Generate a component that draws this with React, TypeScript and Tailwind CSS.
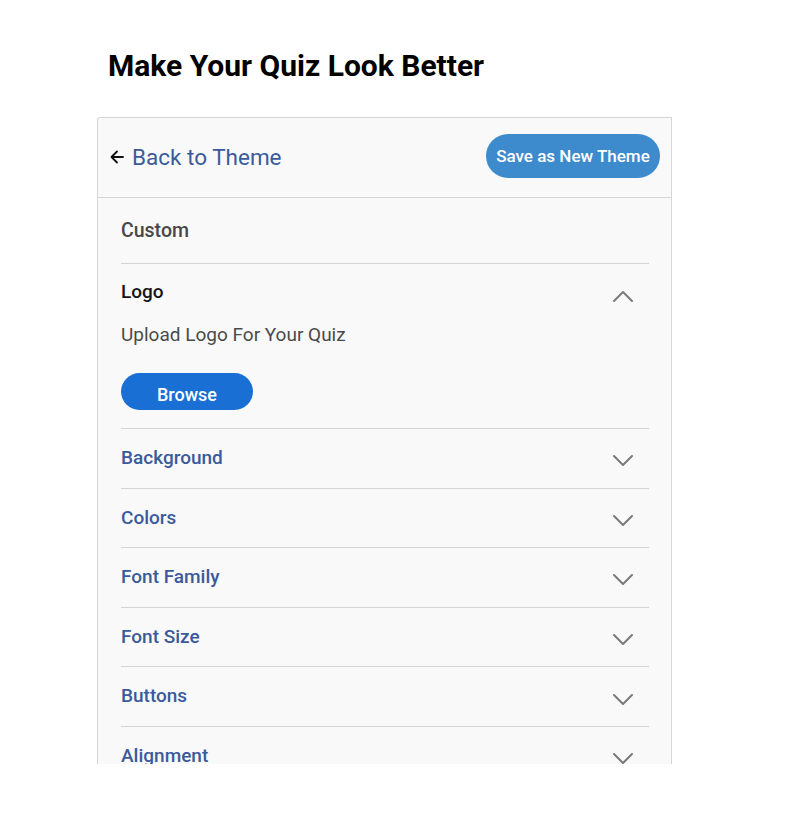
import React from 'react';

const sections = ['Background', 'Colors', 'Font Family', 'Font Size', 'Buttons', 'Alignment'];

function Chevron({ up = false }: { up?: boolean }) {
  return (
    <svg width="20" height="12" viewBox="0 0 20 12" fill="none" className="shrink-0">
      <polyline
        points={up ? '1,11 10,2 19,11' : '1,1 10,10 19,1'}
        stroke="#7a7a7a"
        strokeWidth="2"
        strokeLinecap="round"
        strokeLinejoin="round"
      />
    </svg>
  );
}

export default function App() {
  return (
    <div className="min-h-[814px] bg-white font-['Roboto',_'Liberation_Sans',_sans-serif]">
      <h1 className="pl-[108px] pt-[48px] text-[30px] font-bold leading-[36px] text-black">
        Make Your Quiz Look Better
      </h1>

      <div className="ml-[97px] mt-[33px] h-[647px] w-[575px] overflow-hidden rounded-tl-[3px] border border-b-0 border-[#d6d6d6] bg-[#f9f9f9]">
        {/* Header */}
        <div className="flex h-[80px] items-center justify-between border-b border-[#d6d6d6] pl-3 pr-[11px]">
          <button className="-mt-0.5 flex items-center gap-2">
            <svg width="14" height="14" viewBox="0 0 14 14" fill="none">
              <path d="M13 7H1.5M7 1.5L1.5 7L7 12.5" stroke="#111" strokeWidth="1.8" strokeLinecap="round" strokeLinejoin="round" />
            </svg>
            <span className="text-[22.5px] leading-[28px] text-[#3b5a9c]">Back to Theme</span>
          </button>
          <button className="-mt-1 h-[44px] w-[174px] rounded-full bg-[#3d8bcd] pt-[3px] text-[17px] font-medium text-white">
            Save as New Theme
          </button>
        </div>

        <div className="pl-[23px] pr-[22px]">
          {/* Custom */}
          <div className="flex h-[66px] items-center border-b border-[#d4d4d4]">
            <span className="text-[19.5px] font-medium text-[#474747]">Custom</span>
          </div>

          {/* Logo (expanded) */}
          <div className="border-b border-[#d4d4d4] pb-[18px] pt-[17px]">
            <div className="flex h-[22px] items-start justify-between pr-[16px]">
              <span className="text-[19px] font-medium leading-[22px] text-[#151515]">Logo</span>
              <div className="mt-[9px]">
                <Chevron up />
              </div>
            </div>
            <p className="mt-[21px] text-[19px] leading-[22px] text-[#4a4a4a]">Upload Logo For Your Quiz</p>
            <button className="mt-[27px] h-[37px] w-[132px] rounded-full bg-[#1a6fd4] pt-[5px] text-[18px] font-medium text-white">
              Browse
            </button>
          </div>

          {/* Collapsed sections */}
          {sections.map((s) => (
            <div key={s} className="flex h-[59.6px] items-center justify-between border-b border-[#d4d4d4] pr-[16px]">
              <span className="text-[19px] font-medium text-[#3b5a9c]">{s}</span>
              <div className="mt-1.5">
                <Chevron />
              </div>
            </div>
          ))}
        </div>
      </div>
    </div>
  );
}
